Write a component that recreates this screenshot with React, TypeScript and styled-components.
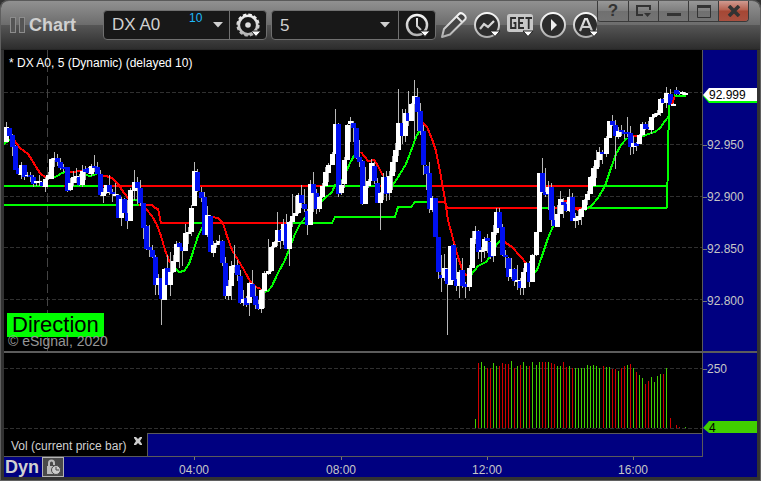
import React from "react";
import styled, { createGlobalStyle, css } from "styled-components";

const GlobalStyle = createGlobalStyle`
  *, *::before, *::after { box-sizing: border-box; }
  body { margin: 0; background: #323232; }
  body, button, input, select { font-family: "Liberation Sans", Arial, sans-serif; }
`;

/* ---------- data ---------- */

type Tone = "w" | "b";
/** x, high, low, body top, body bottom, tone */
type Candle = [number, number, number, number, number, Tone];

const candles: Candle[] = [
  [6, 122, 142, 127, 142, "w"], [9, 128, 136, 128, 136, "b"], [12, 134, 156, 135, 147, "b"],
  [15, 145, 170, 146, 170, "b"], [18, 168, 175, 168, 174, "b"], [21, 162, 179, 165, 175, "w"],
  [24, 165, 180, 165, 177, "b"], [27, 172, 177, 175, 176, "w"], [30, 172, 182, 175, 177, "b"],
  [33, 175, 187, 177, 184, "b"], [36, 181, 186, 181, 183, "w"], [39, 175, 186, 181, 183, "w"],
  [42, 182, 187, 182, 186, "b"], [45, 177, 192, 179, 187, "w"], [48, 172, 180, 175, 179, "w"],
  [51, 158, 179, 159, 179, "w"], [54, 152, 167, 158, 160, "w"], [57, 154, 166, 158, 162, "b"],
  [60, 158, 170, 162, 168, "b"], [63, 164, 172, 167, 169, "b"], [67, 167, 192, 167, 191, "b"],
  [70, 178, 191, 183, 190, "w"], [73, 171, 186, 177, 183, "w"], [76, 168, 183, 176, 178, "w"],
  [79, 174, 186, 177, 185, "b"], [82, 165, 187, 171, 185, "w"], [85, 166, 180, 169, 172, "b"],
  [88, 167, 174, 168, 173, "b"], [91, 164, 176, 166, 174, "w"], [94, 155, 172, 166, 168, "b"],
  [97, 162, 174, 167, 174, "b"], [100, 170, 196, 174, 195, "b"], [103, 188, 203, 192, 196, "w"],
  [106, 185, 194, 185, 193, "w"], [109, 175, 195, 185, 192, "b"], [112, 189, 202, 192, 194, "b"],
  [115, 183, 196, 194, 196, "w"], [118, 194, 218, 195, 218, "b"], [121, 197, 226, 199, 218, "w"],
  [124, 198, 213, 199, 213, "b"], [127, 200, 229, 213, 221, "b"], [130, 188, 221, 190, 221, "w"],
  [134, 170, 200, 182, 191, "w"], [137, 177, 204, 182, 188, "b"], [140, 180, 206, 188, 203, "b"],
  [143, 203, 239, 203, 228, "b"], [146, 225, 250, 226, 249, "b"], [149, 225, 257, 247, 250, "b"],
  [152, 245, 258, 250, 257, "b"], [155, 255, 295, 257, 285, "b"], [158, 274, 295, 278, 285, "w"],
  [161, 278, 325, 278, 299, "b"], [164, 268, 300, 269, 300, "w"], [167, 255, 285, 268, 285, "b"],
  [170, 252, 296, 272, 285, "w"], [173, 255, 273, 261, 272, "w"], [176, 241, 262, 244, 262, "w"],
  [179, 242, 268, 243, 247, "b"], [182, 247, 266, 247, 251, "b"], [185, 224, 251, 233, 251, "w"],
  [188, 227, 244, 232, 234, "w"], [191, 205, 236, 208, 232, "w"], [194, 162, 206, 171, 206, "w"],
  [197, 169, 192, 172, 191, "b"], [201, 187, 202, 192, 198, "b"], [204, 192, 235, 197, 235, "b"],
  [207, 206, 237, 215, 235, "w"], [210, 215, 252, 216, 252, "b"], [213, 241, 257, 245, 253, "w"],
  [216, 240, 248, 243, 245, "w"], [219, 235, 245, 241, 243, "w"], [222, 240, 266, 241, 263, "b"],
  [225, 257, 299, 263, 296, "b"], [228, 280, 300, 286, 296, "w"], [231, 261, 300, 266, 286, "w"],
  [234, 245, 273, 265, 267, "w"], [237, 260, 281, 265, 275, "b"], [240, 270, 304, 276, 303, "b"],
  [243, 290, 306, 299, 303, "w"], [246, 296, 307, 298, 305, "b"], [249, 282, 316, 283, 303, "w"],
  [252, 270, 297, 284, 297, "b"], [255, 286, 309, 296, 305, "b"], [258, 300, 310, 304, 309, "b"],
  [261, 289, 313, 290, 309, "w"], [264, 271, 308, 273, 291, "w"], [268, 239, 275, 271, 274, "w"],
  [271, 246, 272, 247, 271, "w"], [274, 241, 248, 242, 247, "w"], [277, 212, 246, 230, 242, "w"],
  [280, 229, 249, 230, 241, "b"], [283, 219, 245, 224, 241, "w"], [286, 214, 249, 224, 249, "b"],
  [289, 221, 266, 222, 249, "w"], [292, 194, 227, 216, 222, "w"], [295, 196, 216, 213, 216, "w"],
  [298, 193, 214, 195, 213, "w"], [301, 185, 208, 195, 203, "b"], [304, 189, 212, 204, 209, "b"],
  [307, 209, 235, 211, 225, "b"], [310, 180, 225, 184, 225, "w"], [313, 172, 212, 184, 193, "b"],
  [316, 189, 214, 193, 209, "b"], [319, 196, 212, 197, 209, "w"], [322, 183, 198, 186, 197, "w"],
  [325, 167, 186, 172, 186, "w"], [328, 163, 182, 165, 173, "w"], [332, 152, 165, 154, 165, "w"],
  [335, 109, 154, 124, 154, "w"], [338, 123, 197, 124, 194, "b"], [341, 180, 195, 185, 193, "w"],
  [344, 157, 188, 160, 184, "w"], [347, 124, 160, 125, 160, "w"], [350, 117, 142, 121, 124, "w"],
  [353, 121, 142, 123, 128, "b"], [356, 128, 159, 128, 158, "b"], [359, 140, 167, 157, 162, "b"],
  [362, 160, 205, 161, 204, "b"], [365, 167, 204, 186, 204, "w"], [368, 179, 188, 181, 186, "w"],
  [371, 159, 181, 163, 181, "w"], [374, 162, 184, 166, 181, "b"], [377, 178, 203, 183, 203, "b"],
  [380, 192, 230, 193, 203, "w"], [383, 173, 200, 177, 193, "w"], [386, 171, 201, 177, 194, "b"],
  [389, 171, 200, 176, 193, "w"], [392, 156, 190, 162, 176, "w"], [395, 143, 172, 150, 162, "w"],
  [398, 89, 156, 123, 150, "w"], [402, 109, 144, 123, 136, "b"], [405, 109, 142, 113, 136, "w"],
  [408, 91, 126, 113, 121, "b"], [411, 103, 121, 104, 121, "w"], [414, 80, 139, 96, 104, "w"],
  [417, 88, 131, 97, 112, "b"], [420, 103, 135, 111, 131, "b"], [423, 125, 175, 131, 165, "b"],
  [426, 165, 190, 166, 174, "b"], [429, 162, 213, 173, 209, "b"], [432, 196, 212, 198, 210, "w"],
  [435, 198, 237, 198, 237, "b"], [438, 237, 279, 237, 272, "b"], [441, 255, 292, 275, 278, "b"],
  [444, 254, 281, 268, 278, "w"], [447, 268, 335, 269, 284, "b"], [450, 246, 285, 246, 285, "w"],
  [453, 244, 281, 245, 280, "b"], [456, 258, 291, 279, 286, "b"], [459, 270, 298, 272, 286, "w"],
  [462, 258, 288, 270, 286, "b"], [465, 282, 298, 284, 287, "b"], [469, 265, 291, 268, 287, "w"],
  [472, 231, 268, 238, 268, "w"], [475, 226, 244, 231, 239, "w"], [478, 230, 259, 231, 252, "b"],
  [481, 247, 262, 250, 252, "w"], [484, 237, 258, 239, 251, "w"], [487, 234, 253, 238, 241, "b"],
  [490, 241, 259, 242, 257, "b"], [493, 225, 262, 232, 256, "w"], [496, 208, 235, 212, 233, "w"],
  [499, 208, 228, 212, 228, "b"], [502, 224, 256, 227, 255, "b"], [505, 250, 268, 255, 257, "b"],
  [508, 257, 281, 258, 277, "b"], [511, 258, 279, 269, 277, "w"], [514, 268, 286, 269, 281, "b"],
  [517, 265, 290, 280, 282, "w"], [520, 278, 295, 281, 288, "b"], [523, 268, 295, 272, 288, "w"],
  [526, 262, 272, 263, 272, "w"], [529, 261, 287, 263, 282, "b"], [532, 254, 282, 255, 282, "w"],
  [536, 232, 256, 232, 255, "w"], [539, 173, 232, 173, 232, "w"], [542, 158, 193, 173, 192, "b"],
  [545, 168, 197, 192, 195, "b"], [548, 181, 210, 187, 194, "w"], [551, 183, 226, 187, 220, "b"],
  [554, 206, 226, 220, 226, "b"], [557, 205, 227, 214, 227, "w"], [560, 191, 214, 199, 214, "w"],
  [563, 198, 218, 202, 205, "b"], [566, 202, 212, 204, 211, "b"], [569, 189, 212, 197, 211, "w"],
  [572, 193, 221, 197, 221, "b"], [575, 213, 228, 218, 221, "w"], [578, 210, 225, 216, 220, "w"],
  [581, 208, 225, 209, 217, "w"], [584, 199, 210, 200, 210, "w"], [587, 191, 205, 194, 200, "w"],
  [590, 176, 194, 177, 194, "w"], [593, 166, 186, 168, 186, "w"], [596, 150, 178, 160, 169, "w"],
  [599, 147, 167, 152, 160, "w"], [602, 150, 164, 152, 154, "b"], [606, 136, 157, 138, 154, "w"],
  [609, 121, 138, 121, 138, "w"], [612, 115, 126, 121, 125, "b"], [615, 120, 169, 125, 136, "b"],
  [618, 127, 139, 131, 137, "w"], [621, 125, 136, 130, 132, "b"], [624, 130, 139, 132, 134, "b"],
  [627, 117, 137, 132, 134, "b"], [630, 126, 155, 133, 147, "b"], [633, 136, 154, 143, 147, "w"],
  [636, 142, 151, 143, 146, "b"], [639, 134, 144, 135, 144, "w"], [642, 122, 136, 124, 135, "w"],
  [645, 122, 130, 124, 129, "b"], [648, 121, 130, 127, 129, "b"], [651, 117, 134, 117, 130, "w"],
  [654, 113, 118, 114, 117, "w"], [657, 110, 116, 113, 115, "w"], [660, 98, 116, 99, 113, "w"],
  [663, 98, 104, 99, 103, "b"], [666, 87, 108, 93, 103, "w"], [670, 89, 105, 94, 105, "b"],
  [673, 103, 106, 104, 106, "w"], [676, 87, 95, 90, 94, "b"], [679, 91, 95, 92, 94, "b"],
  [682, 91, 95, 92, 94, "w"], [685, 92, 95, 93, 95, "w"],
];

const UP = "#00ff00";
const DOWN = "#ff0000";

const trendLines: { color: string; points: string }[] = [
  { color: UP, points: "4,144 8,141 13,139" },
  { color: DOWN, points: "14,140 20,148 24,151 28,154 32,160 36,167 40,173 46,178" },
  { color: UP, points: "46,179 52,178 57,176 62,173 66,172" },
  { color: DOWN, points: "66,173 72,172 80,171 86,173" },
  { color: UP, points: "86,175 90,176 97,174" },
  { color: DOWN, points: "100,175 106,176 112,178 118,184 124,193 129,199" },
  { color: UP, points: "130,200 138,200" },
  { color: DOWN, points: "140,202 146,209 152,216 157,225 161,236 165,250 170,263" },
  { color: UP, points: "176,269 179,272 184,271 189,264 193,252 198,236 203,226" },
  { color: DOWN, points: "212,217 218,218 223,223 227,236 232,250 238,260 244,270 250,281 256,287 261,289" },
  { color: UP, points: "264,292 268,291 272,286 278,273 285,260 290,247 295,234 300,224 306,217 311,211 318,204 324,199 332,192 335,185 341,182 346,172 350,163 355,154" },
  { color: DOWN, points: "361,152 368,161 374,160 378,166 383,176" },
  { color: UP, points: "386,192 393,185 400,174 406,164 411,151 416,137 421,128" },
  { color: DOWN, points: "423,123 427,127 432,139 436,151 440,171 444,194 448,220 453,239 458,257 463,272 467,276" },
  { color: UP, points: "471,275 478,266 486,262 492,254 497,244 501,240" },
  { color: DOWN, points: "502,240 506,243 512,247 520,256 527,264" },
  { color: UP, points: "533,274 537,270 542,256 548,238 555,222" },
  { color: DOWN, points: "560,202 566,201 572,206 579,211 583,210" },
  { color: UP, points: "585,210 592,205 598,198 605,186 611,168 616,154 621,145 627,138" },
  { color: DOWN, points: "629,136 638,136" },
  { color: UP, points: "641,137 648,134 655,132 660,128 665,121 669,116" },
];

const levelLines: { color: string; points: string }[] = [
  { color: UP, points: "4,186 64,186" },
  { color: DOWN, points: "64,186 70,186" },
  { color: UP, points: "70,186 100,186" },
  { color: DOWN, points: "100,186 325,186" },
  { color: UP, points: "325,186 380,186" },
  { color: DOWN, points: "380,186 385,186" },
  { color: UP, points: "385,186 428,186" },
  { color: DOWN, points: "428,186 592,186" },
  { color: UP, points: "592,186 668,186" },
  { color: UP, points: "4,205 139,205" },
  { color: DOWN, points: "139,205 152,205 155,208 158,209 161,223 193,223" },
  { color: UP, points: "193,223 204,223" },
  { color: DOWN, points: "204,223 289,223" },
  { color: UP, points: "289,223 332,223 335,217 395,217 398,207 411,207 415,202 430,202" },
  { color: DOWN, points: "430,202 445,202 447,208 541,208" },
  { color: UP, points: "541,208 551,208" },
  { color: DOWN, points: "551,208 590,208" },
  { color: UP, points: "590,208 667,208" },
];

/** height and direction of each volume bar, keyed by its x */
const volume: [number, number, "u" | "d"][] = [
  [475, 9, "u"], [478, 65, "d"], [481, 66, "u"], [484, 62, "u"], [487, 60, "d"], [490, 60, "d"],
  [493, 65, "u"], [496, 62, "u"], [499, 62, "d"], [502, 65, "d"], [505, 64, "d"], [508, 64, "d"],
  [511, 67, "u"], [514, 60, "d"], [517, 62, "u"], [520, 63, "d"], [523, 66, "u"], [526, 62, "u"],
  [529, 62, "d"], [532, 66, "u"], [536, 63, "u"], [539, 66, "u"], [542, 66, "d"], [545, 66, "d"],
  [548, 66, "u"], [551, 65, "d"], [554, 64, "d"], [557, 62, "u"], [560, 62, "u"], [563, 66, "d"],
  [566, 61, "d"], [569, 62, "u"], [572, 60, "d"], [575, 60, "u"], [578, 60, "u"], [581, 60, "u"],
  [584, 60, "u"], [587, 63, "u"], [590, 62, "u"], [593, 63, "u"], [596, 62, "u"], [599, 60, "u"],
  [603, 62, "d"], [606, 61, "u"], [609, 61, "u"], [612, 59, "d"], [615, 59, "d"], [618, 57, "u"],
  [621, 60, "d"], [624, 62, "d"], [627, 63, "u"], [630, 64, "d"], [633, 60, "u"], [636, 56, "d"],
  [639, 53, "u"], [642, 50, "u"], [645, 44, "d"], [648, 47, "d"], [651, 51, "u"], [654, 46, "u"],
  [657, 52, "u"], [660, 54, "u"], [663, 54, "d"], [666, 60, "u"], [670, 10, "d"], [676, 3, "d"],
  [679, 1, "d"], [685, 1, "u"],
];

const priceLabels = [
  { text: "92.950", y: 144 },
  { text: "92.900", y: 196 },
  { text: "92.850", y: 248 },
  { text: "92.800", y: 300 },
];

const timeLabels = [
  { text: "04:00", x: 194 },
  { text: "08:00", x: 341 },
  { text: "12:00", x: 487 },
  { text: "16:00", x: 633 },
];

const PLOT = { left: 4, width: 698, top: 50, height: 301, volTop: 353, volHeight: 80 };
const pct = (v: number, start: number, size: number) => `${((v - start) / size) * 100}%`;

/* ---------- layout ---------- */

const Window = styled.div`
  display: flex;
  flex-direction: column;
  height: 100vh;
  padding: 0 4px 4px;
  overflow: hidden;
  background: #323232;
  box-shadow: inset 1px 0 #5f5f5f, inset -1px 0 #5f5f5f, inset 0 -1px #5f5f5f;
  border-radius: 8px 8px 0 0;
`;

const TitleBar = styled.header`
  display: flex;
  flex: none;
  height: 50px;
  margin: 0 -3px;
  padding-left: 9px;
  border-top: 1px solid #5a5a5a;
  border-bottom: 1px solid #262626;
  border-radius: 8px 8px 0 0;
  background: linear-gradient(#919191, #6c6c6c 24px, #565656 24px, #2d2d2d);
`;

const Brand = styled.div`
  display: flex;
  align-items: center;
  gap: 3px;
  width: 93px;
  color: #d0d0d0;
  font-size: 18px;
  font-weight: bold;
  line-height: 20px;
`;

const Tools = styled.div`
  display: flex;
  flex: 1;
  align-items: center;
  min-width: 0;
  overflow: hidden;
`;

const FieldGroup = styled.div<{ $width: number }>`
  display: flex;
  flex: none;
  width: ${(p) => p.$width}px;
  height: 30px;
  margin-right: 4px;
  overflow: hidden;
  border: 1px solid #707070;
  border-radius: 4px;
  background: #181818;
`;

const fieldText = css`
  min-width: 0;
  padding: 0 0 0 8px;
  border: 0;
  outline: 0;
  background: transparent;
  color: #d0d0d0;
  font-size: 17px;
`;

const SymbolInput = styled.input`
  ${fieldText}
  width: 85px;
`;

const IntervalWrap = styled.div`
  position: relative;
  display: flex;
  flex: 1;
`;

const IntervalSelect = styled.select`
  ${fieldText}
  flex: 1;
  appearance: none;
`;

const SelectArrow = styled.span`
  position: absolute;
  right: 8px;
  top: 11px;
  display: flex;
  pointer-events: none;
`;

const DelayNote = styled.span`
  width: 18px;
  color: #1eb8f8;
  font-size: 12px;
  line-height: 14px;
`;

const PlainButton = styled.button`
  display: flex;
  flex: none;
  align-items: center;
  justify-content: center;
  padding: 0;
  border: 0;
  background: transparent;
`;

const DropButton = styled(PlainButton)`
  flex: 1;
`;

const FieldButton = styled(PlainButton)`
  width: 37px;
  border-left: 1px solid #707070;
`;

const ToolButton = styled(PlainButton)`
  width: 28px;
  height: 30px;
  margin-right: 5px;
`;

const WindowButtons = styled.div`
  display: flex;
  flex: none;
  height: 21px;
  margin-right: 11px;
  overflow: hidden;
  border: 1px solid #3a3a3a;
  border-top: 0;
  border-radius: 0 0 4px 4px;
`;

const WindowButton = styled(PlainButton)<{ $close?: boolean }>`
  width: 30px;
  border-left: 1px solid #3a3a3a;
  background: ${(p) =>
    p.$close
      ? "linear-gradient(#d09a90, #b5604f 45%, #a54734 50%, #a85040)"
      : "linear-gradient(#989898, #7e7e7e 50%, #707070 50%, #747474)"};
  color: #333;
  font-size: 17px;
  font-weight: bold;
  &:first-child { border-left: 0; }
`;

const PlotRow = styled.section<{ $share: number }>`
  display: flex;
  flex: ${(p) => p.$share} 1 0;
  min-height: 0;
`;

const Plot = styled.div`
  position: relative;
  flex: 1;
  min-width: 0;
  background: #000;
`;

const PlotSvg = styled.svg`
  display: block;
  width: 100%;
  height: 100%;
`;

const Axis = styled.div`
  position: relative;
  flex: none;
  width: 55px;
  border-left: 1px solid #5a5a5a;
  background: #000080;
`;

const PaneDivider = styled.div`
  flex: none;
  height: 2px;
  background: #5c5c5c;
`;

const AxisLabel = styled.span`
  position: absolute;
  left: 0;
  display: flex;
  align-items: center;
  height: 14px;
  margin-top: -6px;
  color: #c6c6c6;
  font-size: 12px;
  line-height: 14px;
  &::before { content: ""; width: 4px; height: 1px; background: #777; }
`;

const Marker = styled.span`
  position: absolute;
  left: 0;
  right: 0;
  height: 15px;
  margin-top: -7px;
  color: #000;
  font-size: 12px;
  line-height: 14px;
  padding-left: 6px;
`;

const MarkerShape = styled.svg`
  position: absolute;
  inset: 0;
  width: 100%;
  height: 100%;
`;

const MarkerText = styled.span`
  position: relative;
`;

const StudyTitle = styled.h1`
  position: absolute;
  left: 5px;
  top: 6px;
  margin: 0;
  color: #fff;
  font-size: 12px;
  font-weight: normal;
  line-height: 14px;
`;

const Legend = styled.div`
  position: absolute;
  left: 3px;
  bottom: 2px;
`;

const Direction = styled.div`
  width: 97px;
  padding-left: 5px;
  background: #00ff00;
  color: #000;
  font-size: 22px;
  line-height: 24px;
`;

const Copyright = styled.div`
  margin-top: -4px;
  padding-left: 1px;
  color: #969696;
  font-size: 14px;
  line-height: 16px;
`;

const TabRow = styled.div`
  display: flex;
  flex: none;
  height: 24px;
`;

const StudyTab = styled.div`
  display: flex;
  flex: none;
  width: 144px;
  padding: 6px 0 0 7px;
  border-right: 1px solid #5a5a5a;
  border-bottom: 1px solid #5a5a5a;
  background: #000;
  color: #d0d0d0;
  font-size: 12px;
  line-height: 14px;
`;

const TabClose = styled(PlainButton)`
  width: 10px;
  height: 8px;
  margin: -2px 0 0 7px;
`;

const TabFill = styled.div`
  flex: 1;
  border-top: 1px solid #5a5a5a;
  border-bottom: 1px solid #5a5a5a;
  background: #000080;
`;

const TimeRow = styled.footer`
  display: flex;
  flex: none;
  height: 20px;
  padding-right: 55px;
  background: #000080;
`;

const TimeScale = styled.div`
  position: relative;
  display: flex;
  flex: 1;
  align-items: center;
  gap: 3px;
  padding-left: 1px;
`;

const Mode = styled.span`
  color: #d0d0d0;
  font-size: 18px;
  font-weight: bold;
  line-height: 20px;
`;

const LockButton = styled(PlainButton)`
  width: 22px;
  height: 20px;
  border: 1px solid #b4b4b4;
  background: #4a4a4a;
`;

const TimeLabel = styled.span`
  position: absolute;
  top: 0;
  width: 40px;
  margin-left: -20px;
  padding-top: 6px;
  color: #c6c6c6;
  font-size: 12px;
  line-height: 14px;
  text-align: center;
  &::before {
    content: "";
    position: absolute;
    left: 20px;
    top: 0;
    width: 1px;
    height: 3px;
    background: #777;
  }
`;

/* ---------- icons ---------- */

const Caret = () => (
  <svg width="10" height="6" viewBox="0 0 10 6"><path d="M0 0h10L5 5.5z" fill="#d0d0d0" /></svg>
);

const Metal = () => (
  <defs>
    <linearGradient id="metal" gradientUnits="userSpaceOnUse" x1="0" y1="0" x2="0" y2="28">
      <stop offset="0" stopColor="#fff" />
      <stop offset="1" stopColor="#a8a8a8" />
    </linearGradient>
  </defs>
);

const Icon = ({ children }: { children: React.ReactNode }) => (
  <svg width="28" height="28" viewBox="0 0 28 28" fill="none" stroke="url(#metal)" strokeWidth="2">
    <Metal />
    {children}
  </svg>
);

const Corner = () => <path d="M17 20h10l-5 5.500z" fill="#fff" stroke="#222" strokeWidth="1" />;

const GearIcon = () => (
  <Icon>
    <circle cx="14" cy="14" r="9.200" strokeWidth="2.600" />
    <circle cx="14" cy="14" r="10.600" strokeWidth="2" strokeDasharray="3.500 2.050" />
    <circle cx="14" cy="14" r="2.800" fill="#ddd" stroke="none" />
    <Corner />
  </Icon>
);

const ClockIcon = () => (
  <Icon>
    <circle cx="14" cy="14" r="10" strokeWidth="2.500" />
    <path d="M14 7v8l4 4" />
    <Corner />
  </Icon>
);

const PencilIcon = () => (
  <Icon>
    <path d="M2 26l2-8L19 3q2-2 5 .8t.8 5L10 23.500z" fill="#444" strokeLinejoin="round" />
    <path d="M16.500 5.500l6 6" />
  </Icon>
);

const StudyIcon = () => (
  <Icon>
    <circle cx="14" cy="14" r="12" fill="#2c2c2c" />
    <path d="M7 18l4-5 4 3 6-6" strokeWidth="2.200" />
    <Corner />
  </Icon>
);

const GetIcon = () => (
  <Icon>
    <rect x="1" y="3" width="26" height="18" rx="2.500" fill="#c8c8c8" stroke="none" />
    <g stroke="#2d2d2d" strokeWidth="1.800">
      <path d="M10 7H5v10h4.500v-5H7.500" />
      <path d="M18 7h-5v10h5M13 12h4" />
      <path d="M19.500 7H26M22.700 7v11" />
    </g>
    <Corner />
  </Icon>
);

const PlayIcon = () => (
  <Icon>
    <circle cx="14" cy="14" r="12" fill="#2c2c2c" />
    <path d="M12 8l6 6-6 6z" fill="#eee" stroke="none" />
  </Icon>
);

const AutoIcon = () => (
  <Icon>
    <circle cx="14" cy="14" r="12" fill="#2c2c2c" />
    <path d="M8 20l5-12h2l5 12M10 16h8" strokeWidth="2.200" />
    <Corner />
  </Icon>
);

/* ---------- page ---------- */

const GRID = { stroke: "#303030", strokeDasharray: "4 2", fill: "none" };

const PriceChart = () => (
  <PlotSvg viewBox="4 50 698 301" preserveAspectRatio="none" shapeRendering="crispEdges" role="img" aria-label="Price chart">
    {[92, 144, 196, 247, 299].map((y) => (
      <path key={y} d={`M4 ${y + 0.5}H702`} {...GRID} />
    ))}
    <path d="M47.500 50V351" stroke="#444" strokeDasharray="9 4" />
    {[...levelLines, ...trendLines].map((l) => (
      <polyline key={l.points} points={l.points} fill="none" stroke={l.color} strokeWidth="2" />
    ))}
    {candles.map(([x, high, low, top, bottom, tone]) => (
      <g key={x}>
        <rect x={x} y={high} width="1" height={low - high} fill="#b8b8b8" />
        <rect x={x - 2} y={top} width="5" height={bottom - top} fill={tone === "w" ? "#fff" : "#0010f0"} />
      </g>
    ))}
    <path d="M667 208L669 105" stroke={UP} strokeWidth="2" />
    <path d="M672 104l2-5 1-4" stroke={DOWN} strokeWidth="2" fill="none" />
    <path d="M674 95l2 1h10" stroke={UP} strokeWidth="2" fill="none" />
  </PlotSvg>
);

const VolumeChart = () => (
  <PlotSvg viewBox="4 353 698 80" preserveAspectRatio="none" shapeRendering="crispEdges" role="img" aria-label="Volume chart">
    <path d="M4 368.500H702M4 428.500H702" {...GRID} />
    {volume.map(([x, h, dir]) => (
      <rect key={x} x={x} y={428 - h} width="1" height={h} fill={dir === "u" ? "#40d000" : "#d00000"} />
    ))}
  </PlotSvg>
);

export default function App() {
  return (
    <Window>
      <GlobalStyle />
      <TitleBar>
        <Brand>
          <svg width="16" height="16" viewBox="0 0 16 16" fill="#555" stroke="#8c8c8c">
            <rect x=".5" y=".5" width="5" height="15" />
            <rect x="9.500" y=".5" width="5" height="15" />
          </svg>
          Chart
        </Brand>
        <Tools>
          <FieldGroup $width={164}>
            <SymbolInput aria-label="Symbol" defaultValue="DX A0" />
            <DelayNote>10</DelayNote>
            <DropButton aria-label="Choose symbol"><Caret /></DropButton>
            <FieldButton aria-label="Symbol settings"><GearIcon /></FieldButton>
          </FieldGroup>
          <FieldGroup $width={165}>
            <IntervalWrap>
              <IntervalSelect aria-label="Interval" defaultValue="5">
                <option value="5">5</option>
              </IntervalSelect>
              <SelectArrow><Caret /></SelectArrow>
            </IntervalWrap>
            <FieldButton aria-label="Time settings"><ClockIcon /></FieldButton>
          </FieldGroup>
          <ToolButton aria-label="Draw"><PencilIcon /></ToolButton>
          <ToolButton aria-label="Studies"><StudyIcon /></ToolButton>
          <ToolButton aria-label="Get studies"><GetIcon /></ToolButton>
          <ToolButton aria-label="Replay"><PlayIcon /></ToolButton>
          <ToolButton aria-label="Annotate"><AutoIcon /></ToolButton>
        </Tools>
        <WindowButtons>
          <WindowButton aria-label="Help">?</WindowButton>
          <WindowButton aria-label="Window menu">
            <svg width="16" height="14" viewBox="0 0 16 14" fill="none" stroke="#333" strokeWidth="2">
              <path d="M7 11H1V2h13v4" /><path d="M8 9h7l-3.500 4z" fill="#333" stroke="none" />
            </svg>
          </WindowButton>
          <WindowButton aria-label="Minimize">
            <svg width="14" height="14" viewBox="0 0 14 14"><path d="M0 9h14v3H0z" fill="#333" /></svg>
          </WindowButton>
          <WindowButton aria-label="Maximize">
            <svg width="14" height="13" viewBox="0 0 14 13" fill="none" stroke="#333">
              <path d="M.5 1v11.500h13V1" /><path d="M0 1.500h14" strokeWidth="3" />
            </svg>
          </WindowButton>
          <WindowButton $close aria-label="Close">
            <svg width="14" height="12" viewBox="0 0 14 12"><path d="M2 1l10 10M12 1L2 11" stroke="#333" strokeWidth="3.600" /></svg>
          </WindowButton>
        </WindowButtons>
      </TitleBar>

      <PlotRow $share={301}>
        <Plot>
          <PriceChart />
          <StudyTitle>* DX A0, 5 (Dynamic) (delayed 10)</StudyTitle>
          <Legend>
            <Direction>Direction</Direction>
            <Copyright>© eSignal, 2020</Copyright>
          </Legend>
        </Plot>
        <Axis>
          {priceLabels.map((l) => (
            <AxisLabel key={l.text} style={{ top: pct(l.y, PLOT.top, PLOT.height) }}>{l.text}</AxisLabel>
          ))}
          <Marker style={{ top: pct(95, PLOT.top, PLOT.height) }}>
            <MarkerShape viewBox="0 0 54 15" preserveAspectRatio="none">
              <path d="M0 8L6 2H54V15H6z" fill="#00ff00" />
              <path d="M0 7L6 0H54V13H6z" fill="#fff" />
            </MarkerShape>
            <MarkerText>92.999</MarkerText>
          </Marker>
        </Axis>
      </PlotRow>

      <PaneDivider />

      <PlotRow $share={80}>
        <Plot><VolumeChart /></Plot>
        <Axis>
          <AxisLabel style={{ top: pct(368, PLOT.volTop, PLOT.volHeight) }}>250</AxisLabel>
          <Marker style={{ top: pct(428, PLOT.volTop, PLOT.volHeight) }}>
            <MarkerShape viewBox="0 0 54 15" preserveAspectRatio="none">
              <path d="M0 7L6 0H54V12H6z" fill="#40d000" />
            </MarkerShape>
            <MarkerText>4</MarkerText>
          </Marker>
        </Axis>
      </PlotRow>

      <TabRow>
        <StudyTab>
          Vol (current price bar)
          <TabClose aria-label="Close study">
            <svg width="10" height="8" viewBox="0 0 10 8"><path d="M1 0h2l2 2 2-2h2v1L7 4l2 3v1H7L5 6 3 8H1V7l2-3-2-3z" fill="#ccc" /></svg>
          </TabClose>
        </StudyTab>
        <TabFill />
        <Axis />
      </TabRow>

      <TimeRow>
        <TimeScale>
          <Mode>Dyn</Mode>
          <LockButton aria-label="Time lock">
            <svg width="16" height="16" viewBox="0 0 16 16" fill="none" stroke="#bbb" strokeWidth="2">
              <path d="M4 7V4q0-2.500 2.500-2.500T9 4v2" />
              <rect x="2" y="7" width="7" height="8" fill="#bbb" stroke="none" />
              <circle cx="11" cy="11" r="4.500" fill="#ccc" stroke="#4a4a4a" strokeWidth="1" />
              <path d="M11 8v3h3" stroke="#444" strokeWidth="1" />
            </svg>
          </LockButton>
          {timeLabels.map((l) => (
            <TimeLabel key={l.text} style={{ left: pct(l.x, PLOT.left, PLOT.width) }}>{l.text}</TimeLabel>
          ))}
        </TimeScale>
      </TimeRow>
    </Window>
  );
}
